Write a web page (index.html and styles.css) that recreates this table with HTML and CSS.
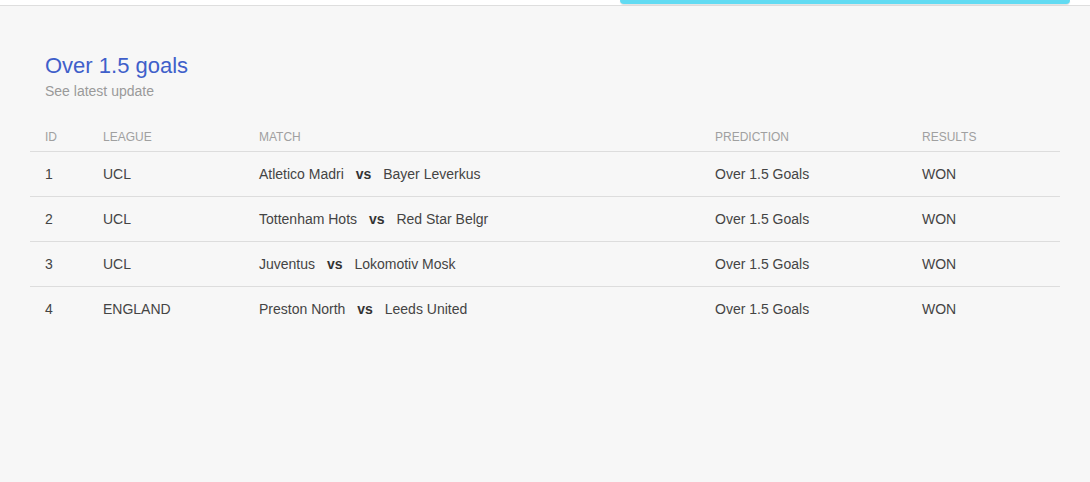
FILE: index.html
```html
<!DOCTYPE html>
<html>
<head>
<meta charset="utf-8">
<link rel="stylesheet" href="styles.css">
</head>
<body>
<header class="topbar">
  <div class="topbar-tab"></div>
</header>
<main class="content">
  <div class="card-head">
    <h2 class="card-title">Over 1.5 goals</h2>
    <p class="card-sub">See latest update</p>
  </div>
  <table class="tips">
    <colgroup>
      <col class="c-id"><col class="c-league"><col class="c-match"><col class="c-pred"><col class="c-res">
    </colgroup>
    <thead>
      <tr><th>ID</th><th>League</th><th>Match</th><th>Prediction</th><th>Results</th></tr>
    </thead>
    <tbody>
      <tr><td>1</td><td>UCL</td><td>Atletico Madri <b class="vs">vs</b> Bayer Leverkus</td><td>Over 1.5 Goals</td><td>WON</td></tr>
      <tr><td>2</td><td>UCL</td><td>Tottenham Hots <b class="vs">vs</b> Red Star Belgr</td><td>Over 1.5 Goals</td><td>WON</td></tr>
      <tr><td>3</td><td>UCL</td><td>Juventus <b class="vs">vs</b> Lokomotiv Mosk</td><td>Over 1.5 Goals</td><td>WON</td></tr>
      <tr><td>4</td><td>ENGLAND</td><td>Preston North <b class="vs">vs</b> Leeds United</td><td>Over 1.5 Goals</td><td>WON</td></tr>
    </tbody>
  </table>
</main>
</body>
</html>
```

FILE: styles.css
```css
html, body {
  margin: 0;
  padding: 0;
  height: 100%;
}
body {
  font-family: "Liberation Sans", Arial, sans-serif;
  background: #f7f7f7;
  color: #444;
  display: flex;
  flex-direction: column;
}
.topbar {
  height: 5px;
  background: #fff;
  border-bottom: 1px solid #dedede;
  display: flex;
  justify-content: flex-end;
  padding-right: 20px;
}
.topbar-tab {
  width: 450px;
  height: 4px;
  background: #62dbf2;
  border-radius: 0 0 4px 4px;
  box-shadow: 0 1px 1px rgba(0,0,0,0.12);
}
.content {
  flex: 1;
  background: #f7f7f7;
  padding: 47px 30px 0 30px;
}
.card-head {
  padding-left: 15px;
}
.card-title {
  margin: 0;
  font-size: 22px;
  line-height: 26px;
  font-weight: 400;
  color: #3f5fca;
}
.card-sub {
  margin: 2px 0 0 0;
  font-size: 14px;
  line-height: 20px;
  color: #9a9a9a;
}
.tips {
  margin-top: 16px;
  width: 1030px;
  table-layout: fixed;
  border-collapse: collapse;
}
.c-id { width: 58px; }
.c-league { width: 156px; }
.c-match { width: 456px; }
.c-pred { width: 207px; }
.c-res { width: 153px; }
.tips th {
  text-align: left;
  font-weight: 400;
  text-transform: uppercase;
  font-size: 12px;
  line-height: 16px;
  color: #a0a0a0;
  padding: 12px 15px 6px 15px;
}
.tips td {
  font-size: 14px;
  line-height: 20px;
  color: #444;
  padding: 12px 15px;
  border-top: 1px solid #dddddd;
  white-space: nowrap;
}
.vs {
  font-weight: 700;
  color: #333;
  margin: 0 8px 0 8px;
}
```
